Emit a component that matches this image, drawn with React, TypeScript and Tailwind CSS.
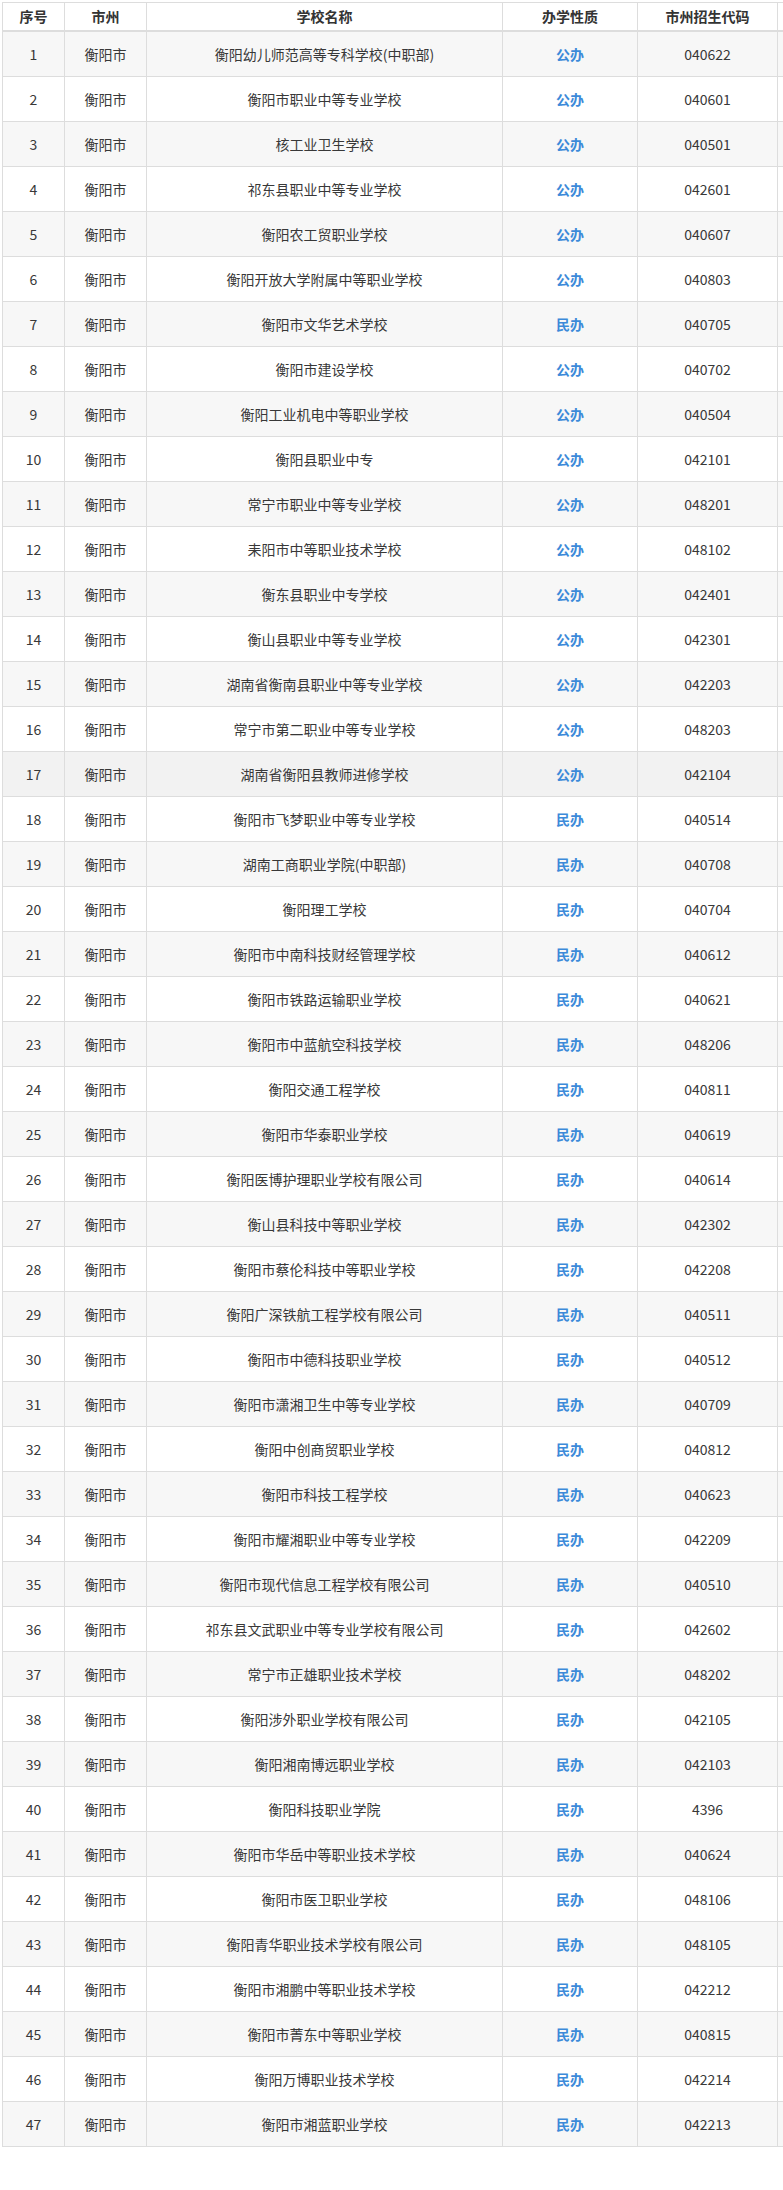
const rows: [string, string, string][] = [
  ["衡阳幼儿师范高等专科学校(中职部)", "公办", "040622"],
  ["衡阳市职业中等专业学校", "公办", "040601"],
  ["核工业卫生学校", "公办", "040501"],
  ["祁东县职业中等专业学校", "公办", "042601"],
  ["衡阳农工贸职业学校", "公办", "040607"],
  ["衡阳开放大学附属中等职业学校", "公办", "040803"],
  ["衡阳市文华艺术学校", "民办", "040705"],
  ["衡阳市建设学校", "公办", "040702"],
  ["衡阳工业机电中等职业学校", "公办", "040504"],
  ["衡阳县职业中专", "公办", "042101"],
  ["常宁市职业中等专业学校", "公办", "048201"],
  ["耒阳市中等职业技术学校", "公办", "048102"],
  ["衡东县职业中专学校", "公办", "042401"],
  ["衡山县职业中等专业学校", "公办", "042301"],
  ["湖南省衡南县职业中等专业学校", "公办", "042203"],
  ["常宁市第二职业中等专业学校", "公办", "048203"],
  ["湖南省衡阳县教师进修学校", "公办", "042104"],
  ["衡阳市飞梦职业中等专业学校", "民办", "040514"],
  ["湖南工商职业学院(中职部)", "民办", "040708"],
  ["衡阳理工学校", "民办", "040704"],
  ["衡阳市中南科技财经管理学校", "民办", "040612"],
  ["衡阳市铁路运输职业学校", "民办", "040621"],
  ["衡阳市中蓝航空科技学校", "民办", "048206"],
  ["衡阳交通工程学校", "民办", "040811"],
  ["衡阳市华泰职业学校", "民办", "040619"],
  ["衡阳医博护理职业学校有限公司", "民办", "040614"],
  ["衡山县科技中等职业学校", "民办", "042302"],
  ["衡阳市蔡伦科技中等职业学校", "民办", "042208"],
  ["衡阳广深铁航工程学校有限公司", "民办", "040511"],
  ["衡阳市中德科技职业学校", "民办", "040512"],
  ["衡阳市潇湘卫生中等专业学校", "民办", "040709"],
  ["衡阳中创商贸职业学校", "民办", "040812"],
  ["衡阳市科技工程学校", "民办", "040623"],
  ["衡阳市耀湘职业中等专业学校", "民办", "042209"],
  ["衡阳市现代信息工程学校有限公司", "民办", "040510"],
  ["祁东县文武职业中等专业学校有限公司", "民办", "042602"],
  ["常宁市正雄职业技术学校", "民办", "048202"],
  ["衡阳涉外职业学校有限公司", "民办", "042105"],
  ["衡阳湘南博远职业学校", "民办", "042103"],
  ["衡阳科技职业学院", "民办", "4396"],
  ["衡阳市华岳中等职业技术学校", "民办", "040624"],
  ["衡阳市医卫职业学校", "民办", "048106"],
  ["衡阳青华职业技术学校有限公司", "民办", "048105"],
  ["衡阳市湘鹏中等职业技术学校", "民办", "042212"],
  ["衡阳市菁东中等职业学校", "民办", "040815"],
  ["衡阳万博职业技术学校", "民办", "042214"],
  ["衡阳市湘蓝职业学校", "民办", "042213"],
];

const cell = "border-r border-b border-[#dddddd] text-center align-middle";

// row 17 is shown in its hover shade in the screenshot
function rowBg(i: number) {
  if (i === 16) return "bg-[#f2f2f2]";
  return i % 2 === 0 ? "bg-[#f7f7f7]" : "bg-white";
}

export default function App() {
  return (
    <div className="w-[783px] h-[2190px] overflow-hidden bg-white pl-[2px] pt-[2px] font-['Noto_Sans_CJK_SC','Microsoft_YaHei',sans-serif] text-[14px] text-[#383838]">
      <table className="table-fixed w-[915px] border-separate border-spacing-0 border-l border-t border-[#dddddd]">
        <colgroup>
          <col className="w-[62px]" />
          <col className="w-[82px]" />
          <col className="w-[356px]" />
          <col className="w-[135px]" />
          <col className="w-[140px]" />
          <col className="w-[140px]" />
        </colgroup>
        <thead>
          <tr className="h-[29px] font-bold text-[#333]">
            <th className={`${cell} border-b-2`}>序号</th>
            <th className={`${cell} border-b-2`}>市州</th>
            <th className={`${cell} border-b-2`}>学校名称</th>
            <th className={`${cell} border-b-2`}>办学性质</th>
            <th className={`${cell} border-b-2`}>市州招生代码</th>
            <th className={`${cell} border-b-2`}></th>
          </tr>
        </thead>
        <tbody>
          {rows.map(([name, kind, code], i) => (
            <tr key={i} className={`h-[45px] ${rowBg(i)}`}>
              <td className={cell}>{i + 1}</td>
              <td className={cell}>衡阳市</td>
              <td className={cell}>{name}</td>
              <td className={`${cell} font-bold text-[#3c8ad9]`}>{kind}</td>
              <td className={cell}>{code}</td>
              <td className={cell}></td>
            </tr>
          ))}
        </tbody>
      </table>
    </div>
  );
}
